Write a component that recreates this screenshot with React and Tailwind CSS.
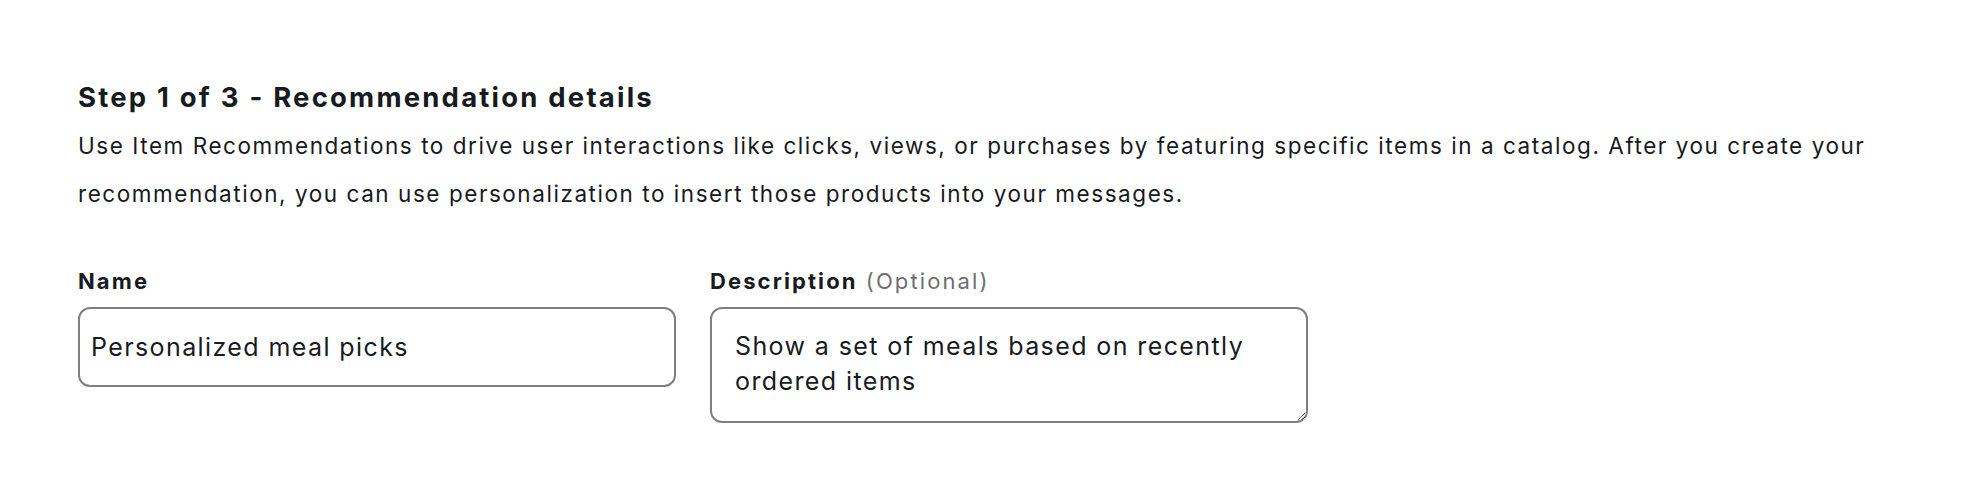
export default function App() {
  return (
    <div className="min-h-screen bg-white text-[#171a21] px-[78px] pt-[80px]" style={{ fontFamily: "Inter, 'Liberation Sans', sans-serif" }}>
      <h2 className="text-[27.5px] font-bold leading-[34px] tracking-[2.2px]">
        Step 1 of 3 - Recommendation details
      </h2>
      <p className="text-[22.5px] leading-[48px] mt-[8px] tracking-[1.55px]">
        Use Item Recommendations to drive user interactions like clicks, views, or purchases by featuring specific items in a catalog. After you create your recommendation, you can use personalization to insert those products into your messages.
      </p>

      <div className="flex items-start gap-[34px] mt-[48px]">
        <div className="w-[598px] flex flex-col">
          <label className="text-[22px] font-bold leading-[30px] tracking-[2.1px]">Name</label>
          <input
            type="text"
            defaultValue="Personalized meal picks"
            className="mt-[11px] h-[80px] w-full rounded-[12px] border-2 border-[#7f7f82] px-[11px] text-[25px] tracking-[1.4px] text-[#171a21] outline-none"
          />
        </div>
        <div className="w-[598px] flex flex-col">
          <label className="text-[22px] leading-[30px] tracking-[2.1px]">
            <span className="font-bold">Description</span>{" "}
            <span className="text-[#6e6e72]">(Optional)</span>
          </label>
          <textarea
            defaultValue="Show a set of meals based on recently ordered items"
            className="mt-[11px] h-[116px] w-full rounded-[12px] border-2 border-[#7f7f82] px-[23px] pt-[20px] pb-[10px] text-[25px] leading-[35px] tracking-[1.4px] text-[#171a21] outline-none"
          />
        </div>
      </div>
    </div>
  );
}
